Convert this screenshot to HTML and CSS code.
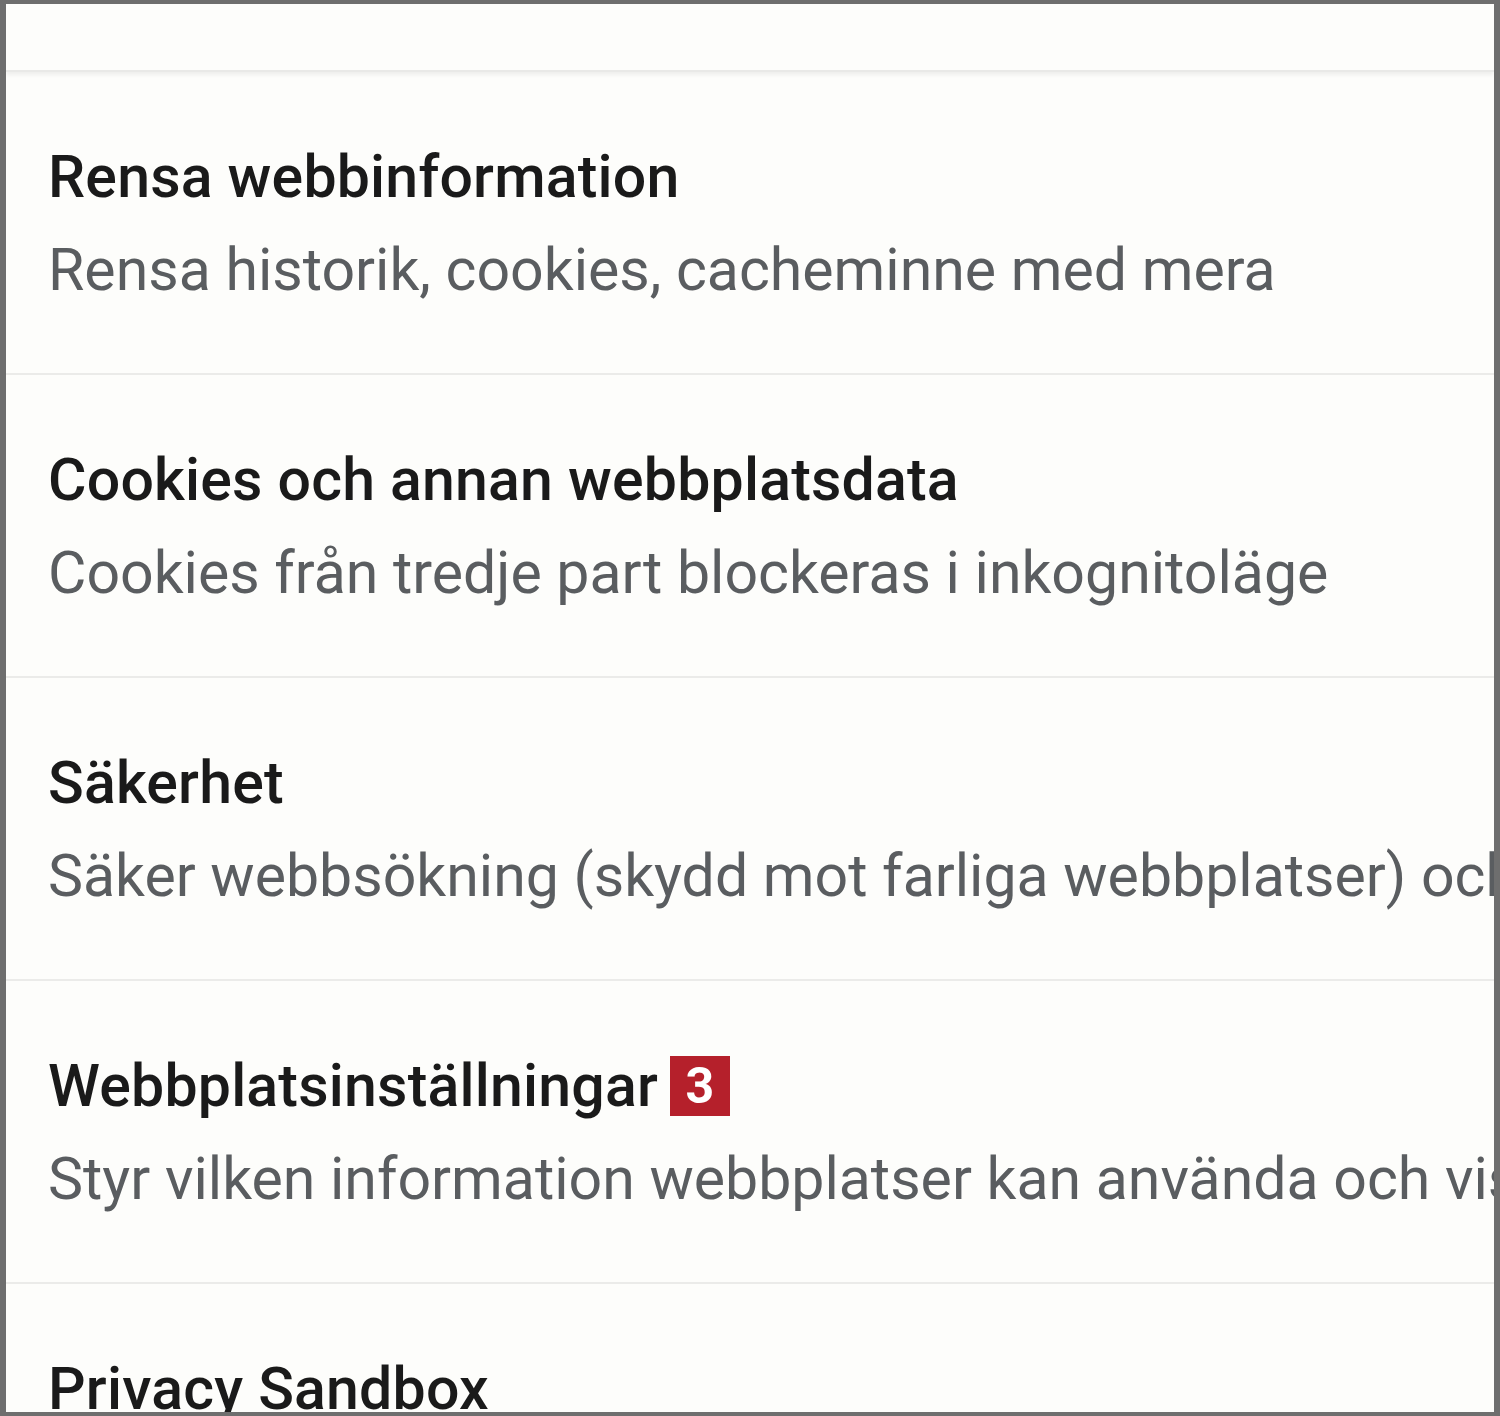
FILE: index.html
```html
<!DOCTYPE html>
<html lang="sv">
<head>
    <meta charset="UTF-8">
    <meta name="viewport" content="width=device-width, initial-scale=1.0">
    <title>Sekretess och säkerhet</title>
    <link rel="stylesheet" href="styles.css">
</head>
<body>
    <div class="ram">
        <div class="topp"></div>
        <div class="lista">
            <div class="rad">
                <div class="rubrik">Rensa webbinformation</div>
                <div class="text">Rensa historik, cookies, cacheminne med mera</div>
            </div>
            <div class="rad">
                <div class="rubrik">Cookies och annan webbplatsdata</div>
                <div class="text">Cookies från tredje part blockeras i inkognitoläge</div>
            </div>
            <div class="rad">
                <div class="rubrik">Säkerhet</div>
                <div class="text">Säker webbsökning (skydd mot farliga webbplatser) och andra säkerhetsinställningar</div>
            </div>
            <div class="rad">
                <div class="rubrik">Webbplatsinställningar <span class="markering">3</span></div>
                <div class="text">Styr vilken information webbplatser kan använda och visa (plats, kamera, popup-fönster med mera)</div>
            </div>
            <div class="rad">
                <div class="rubrik">Privacy Sandbox</div>
                <div class="text">Testfunktionerna är aktiverade</div>
            </div>
        </div>
    </div>
</body>
</html>
```

FILE: styles.css
```css
body{
    margin: 0;
    background-color: #fdfdfb;
    font-family: Roboto, "Liberation Sans", sans-serif;
}
.ram{
    box-sizing: border-box;
    height: 1416px;
    border: 4px solid #6e6e6e;
    border-left-width: 6px;
    border-right-width: 6px;
    overflow: hidden;
    background-color: #fdfdfb;
}
.topp{
    height: 66px;
    border-bottom: 2px solid #e9e9e7;
    box-shadow: 0 3px 4px rgba(0, 0, 0, 0.06);
}
.rad{
    padding: 70px 0 68px 42px;
    border-bottom: 2px solid #ebebe9;
    white-space: nowrap;
    overflow: hidden;
}
.rubrik{
    font-size: 59px;
    line-height: 70px;
    font-weight: 500;
    letter-spacing: 0.2px;
    color: #1a1a1a;
    display: flex;
    align-items: center;
}
.text{
    font-size: 59px;
    line-height: 70px;
    margin-top: 23px;
    color: #5a5d60;
}
.markering{
    display: inline-flex;
    align-items: center;
    justify-content: center;
    width: 60px;
    height: 60px;
    margin-left: 12px;
    background-color: #b5202b;
    color: white;
    font-weight: 700;
    font-size: 50px;
}
```
